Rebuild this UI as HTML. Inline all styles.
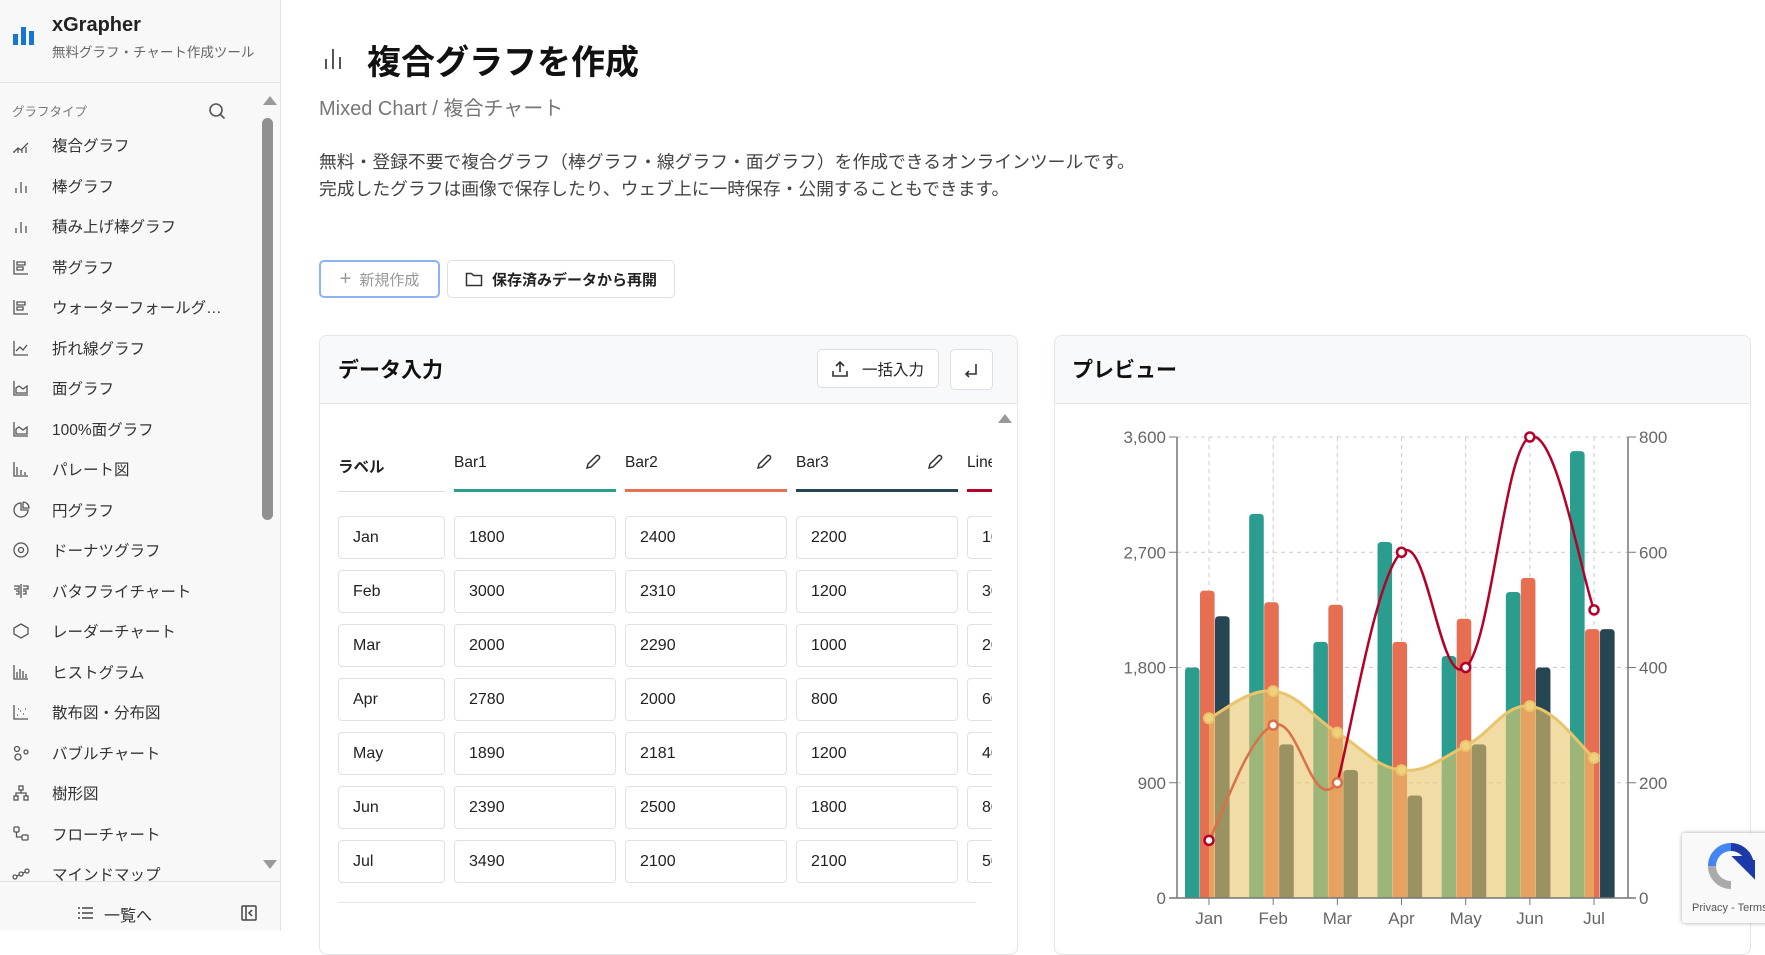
<!DOCTYPE html>
<html><head><meta charset="utf-8"><style>
*{box-sizing:border-box;margin:0;padding:0}
body{width:1765px;height:931px;overflow:hidden;background:#fff;font-family:"Liberation Sans","Noto Sans CJK JP",sans-serif;color:#222;position:relative}
.abs{position:absolute}
#side{left:0;top:0;width:281px;height:931px;background:#f8f8f8;border-right:1px solid #e2e2e2}
.item{position:absolute;left:0;width:260px;height:40px;font-size:15.5px;color:#333;display:flex;align-items:center}
.item svg{position:absolute;left:12px;width:18px;height:18px}
.item span{position:absolute;left:52px;white-space:nowrap}
.card{border:1px solid #e3e5e8;border-radius:8px;background:#fff;overflow:hidden}
.chd{background:#f8f9fa;border-bottom:1px solid #e3e5e8;height:68px;position:relative}
.btn{position:absolute;border:1px solid #dcdfe3;border-radius:5px;background:#fff;display:flex;align-items:center;justify-content:center;font-size:15px;font-weight:bold;color:#222}
.inp{position:absolute;height:43px;border:1px solid #dfe1e5;border-radius:4px;font-size:16px;padding-left:14px;line-height:41px;background:#fff;overflow:hidden;white-space:nowrap}
.th{position:absolute;top:452px;font-size:15.5px;color:#222}
</style></head><body>
<div id="side" class="abs">
  <svg class="abs" style="left:13px;top:25px" width="22" height="20"><rect x="0" y="9" width="5" height="11" fill="#1677d2"/><rect x="8" y="2" width="5" height="18" fill="#1677d2"/><rect x="16" y="6" width="5" height="14" fill="#1677d2"/></svg>
  <div class="abs" style="left:52px;top:14px;font-size:20px;font-weight:bold;color:#222">xGrapher</div>
  <div class="abs" style="left:52px;top:41px;font-size:13.5px;color:#666">無料グラフ・チャート作成ツール</div>
  <div class="abs" style="left:0;top:82px;width:280px;border-top:1px solid #e2e2e2"></div>
  <div class="abs" style="left:12px;top:101px;font-size:12.5px;color:#777">グラフタイプ</div>
  <svg class="abs" style="left:208px;top:102px" width="18" height="18" fill="none" stroke="#555" stroke-width="1.6"><circle cx="8" cy="8" r="6"/><path d="M12.5 12.5l4 4"/></svg>
  <div class="abs" style="left:263px;top:96px;width:0;height:0;border-left:7px solid transparent;border-right:7px solid transparent;border-bottom:9px solid #999"></div>
  <div class="abs" style="left:262px;top:118px;width:11px;height:402px;background:#909090;border-radius:6px"></div>
  <div class="abs" style="left:263px;top:860px;width:0;height:0;border-left:7px solid transparent;border-right:7px solid transparent;border-top:9px solid #999"></div>
  <div class="abs" style="left:0;top:118px;width:260px;height:763px;overflow:hidden" id="list"></div>
  <div class="abs" style="left:0;top:881px;width:280px;height:50px;border-top:1px solid #e2e2e2;background:#f8f8f8">
    <svg class="abs" style="left:77px;top:24px" width="16" height="14" stroke="#444" stroke-width="1.5"><path d="M5 2h11M5 7h11M5 12h11M1 2h2M1 7h2M1 12h2"/></svg>
    <div class="abs" style="left:104px;top:20px;font-size:16px;color:#333">一覧へ</div>
    <svg class="abs" style="left:241px;top:23px" width="16" height="16" fill="none" stroke="#444" stroke-width="1.5"><rect x="1" y="1" width="14" height="14" rx="1"/><path d="M5 1v14M11 5l-3 3 3 3"/></svg>
  </div>
</div>

<svg class="abs" style="left:323px;top:45px" width="22" height="24" stroke="#555" stroke-width="2"><path d="M3 24V14M10 24V4M17 24V12"/></svg>
<div class="abs" style="left:367px;top:35px;font-size:34px;font-weight:bold;color:#111">複合グラフを作成</div>
<div class="abs" style="left:319px;top:92px;font-size:20px;color:#777">Mixed Chart / 複合チャート</div>
<div class="abs" style="left:319px;top:149px;font-size:17.8px;line-height:27px;color:#444;white-space:nowrap">無料・登録不要で複合グラフ（棒グラフ・線グラフ・面グラフ）を作成できるオンラインツールです。<br>完成したグラフは画像で保存したり、ウェブ上に一時保存・公開することもできます。</div>

<div class="btn" style="left:319px;top:260px;width:121px;height:38px;border:2px solid #8fb2f3;color:#999;font-weight:normal"><span style="font-size:20px;margin-right:8px;color:#999">+</span>新規作成</div>
<div class="btn" style="left:447px;top:260px;width:228px;height:38px"><svg width="18" height="16" fill="none" stroke="#333" stroke-width="1.5" style="margin-right:9px"><path d="M1.5 2.5h5l2 2h8v10h-15z"/></svg>保存済みデータから再開</div>

<div class="card abs" style="left:319px;top:335px;width:699px;height:620px">
  <div class="chd"><div class="abs" style="left:18px;top:18px;font-size:21px;font-weight:bold;color:#111">データ入力</div>
    <div class="btn" style="left:497px;top:13px;width:122px;height:39px;font-weight:normal;font-size:15.5px"><svg width="16" height="17" fill="none" stroke="#333" stroke-width="1.6" style="margin-right:14px"><path d="M8 12V2M4 6l4-4 4 4M1 11v5h14v-5"/></svg>一括入力</div>
    <div class="btn" style="left:630px;top:13px;width:43px;height:41px"><svg width="16" height="16" fill="none" stroke="#333" stroke-width="1.6"><path d="M12 2v10H2M5 9l-3 3 3 3"/></svg></div>
  </div>
  <div class="abs" style="left:678px;top:78px;width:0;height:0;border-left:7px solid transparent;border-right:7px solid transparent;border-bottom:9px solid #999"></div>
</div>
<div class="abs" style="left:338px;top:902px;width:638px;border-top:1px solid #e3e5e8"></div>
<div id="tbl"></div>

<div class="card abs" style="left:1054px;top:335px;width:697px;height:620px">
  <div class="chd"><div class="abs" style="left:17px;top:18px;font-size:21px;font-weight:bold;color:#111">プレビュー</div></div>
</div>
<svg id="chart" class="abs" style="left:0;top:0" width="1765" height="931"></svg>

<div class="abs" style="left:1682px;top:833px;width:90px;height:90px;background:#f9f9f9;border-radius:3px;box-shadow:0 0 4px rgba(0,0,0,.35)">
  <svg class="abs" style="left:24px;top:8px" width="50" height="50"><path d="M25 6a19 19 0 0 1 18 13h-8l10 10 0-10" fill="none" stroke="#1c3aa9" stroke-width="8"/><path d="M6 25a19 19 0 0 1 19-19" fill="none" stroke="#4285f4" stroke-width="8"/><path d="M25 44a19 19 0 0 1-19-19" fill="none" stroke="#aaa" stroke-width="8"/></svg>
  <div class="abs" style="left:10px;top:69px;font-size:11px;color:#555;white-space:nowrap">Privacy - Terms</div>
</div>

<script>
var items=["複合グラフ","棒グラフ","積み上げ棒グラフ","帯グラフ","ウォーターフォールグ…","折れ線グラフ","面グラフ","100%面グラフ","パレート図","円グラフ","ドーナツグラフ","バタフライチャート","レーダーチャート","ヒストグラム","散布図・分布図","バブルチャート","樹形図","フローチャート","マインドマップ"];
var icons=['<path d="M2 16l4-4 3 2 7-7M2 17v-2M6 17v-4M10 17v-3M14 17v-6"/>','<path d="M4 16v-5M9 16V5M14 16V9"/>','<path d="M4 16v-5M9 16V5M14 16V9"/>','<path d="M2 2v14h14M5 4h8v3H5zM5 9h6v3H5z"/>','<path d="M2 2v14h14M5 4h8v3H5zM5 9h6v3H5z"/>','<path d="M2 2v14h14M4 12l4-4 3 3 4-5"/>','<path d="M2 2v14h14M4 14V9l3-2 4 3 4-3v7z"/>','<path d="M2 2v14h14M4 14V9l3-2 4 3 4-3v7z"/>','<path d="M2 2v14h14M5 15V7M9 15v-5M13 15v-3"/>','<path d="M9 2a7 7 0 1 0 7 7H9z"/><path d="M11 1v6h6a6 6 0 0 0-6-6"/>','<circle cx="9" cy="9" r="7"/><circle cx="9" cy="9" r="2.5"/>','<path d="M9 2v14M2 4h5v3H2M4 9h3v3H4M11 4h5v3h-5M11 9h3v3h-3"/>','<path d="M9 2l7 4v6l-7 4-7-4V6z"/>','<path d="M2 2v14h14M5 15V9M8 15V6M11 15V8M14 15v-4"/>','<path d="M2 2v14h14M5 12h1M8 8h1M11 11h1M13 6h1M6 6h1"/>','<circle cx="5" cy="5" r="2.5"/><circle cx="6" cy="13" r="3"/><circle cx="14" cy="8" r="2"/>','<rect x="7" y="2" width="4" height="4"/><rect x="2" y="12" width="4" height="4"/><rect x="12" y="12" width="4" height="4"/><path d="M9 6v3M4 12V9h10v3"/>','<rect x="2" y="2" width="5" height="5" rx="1"/><rect x="10" y="10" width="6" height="5" rx="1"/><path d="M4.5 7v5h5.5"/>','<circle cx="9" cy="9" r="2"/><circle cx="3" cy="12" r="2"/><circle cx="15" cy="6" r="2"/><path d="M5 11l2-1M11 8l2-1"/>'];
var h='';items.forEach(function(t,i){var y=27+i*40.5-20;h+='<div class="item" style="top:'+y+'px"><svg viewBox="0 0 18 18" fill="none" stroke="#555" stroke-width="1.3">'+icons[i]+'</svg><span>'+t+'</span></div>'});
document.getElementById('list').innerHTML=h;
var m=["Jan","Feb","Mar","Apr","May","Jun","Jul"],b1=[1800,3000,2000,2780,1890,2390,3490],b2=[2400,2310,2290,2000,2181,2500,2100],b3=[2200,1200,1000,800,1200,1800,2100],ln=["100","300","200","600","400","800","500"];
var t='<div class="th" style="left:338px;font-weight:bold;top:455px">ラベル</div><div class="abs" style="left:338px;top:491px;width:107px;border-top:1px solid #ddd"></div>';
var cols=[["Bar1",454,"#2a9d8f"],["Bar2",625,"#e76f51"],["Bar3",796,"#264653"]];
var pen='<svg width="18" height="18" fill="none" stroke="#333" stroke-width="1.5"><path d="M3 15l1-4 8-8a2 2 0 0 1 3 3l-8 8z"/></svg>';
cols.forEach(function(c){t+='<div class="th" style="left:'+c[1]+'px;top:454px">'+c[0]+'</div><div class="abs" style="left:'+(c[1]+130)+'px;top:453px">'+pen+'</div><div class="abs" style="left:'+c[1]+'px;top:489px;width:162px;height:3px;background:'+c[2]+'"></div>'});
t+='<div class="abs" style="left:967px;top:454px;width:25px;overflow:hidden;font-size:15.5px">Line</div><div class="abs" style="left:967px;top:489px;width:25px;height:3px;background:#b5002a"></div>';
for(var i=0;i<7;i++){var y=516+i*54;t+='<div class="inp" style="left:338px;top:'+y+'px;width:107px">'+m[i]+'</div><div class="inp" style="left:454px;top:'+y+'px;width:162px">'+b1[i]+'</div><div class="inp" style="left:625px;top:'+y+'px;width:162px">'+b2[i]+'</div><div class="inp" style="left:796px;top:'+y+'px;width:162px">'+b3[i]+'</div><div class="inp" style="left:967px;top:'+y+'px;width:25px;border-right:none;border-radius:4px 0 0 4px">'+ln[i]+'</div>'}
document.getElementById('tbl').innerHTML=t;
var y0=898,yt=437,L=1177,R=1628,X=function(i){return 1209+i*64.17},YL=function(v){return y0-v*(y0-yt)/3600},YR=function(v){return y0-v*(y0-yt)/800};
var s='';
[900,1800,2700,3600].forEach(function(v){s+='<line x1="'+L+'" x2="'+R+'" y1="'+YL(v)+'" y2="'+YL(v)+'" stroke="#ccc" stroke-dasharray="4 4"/>'});
for(var i=0;i<7;i++)s+='<line x1="'+X(i)+'" x2="'+X(i)+'" y1="'+yt+'" y2="'+y0+'" stroke="#ccc" stroke-dasharray="4 4"/>';
var bw=14.6;
function bar(x,v,c){var y=YL(v);return '<path d="M'+x+' '+y0+'V'+(y+4)+'q0-4 4-4h'+(bw-8)+'q4 0 4 4V'+y0+'z" fill="'+c+'"/>'}
for(var i=0;i<7;i++){var cx=X(i);s+=bar(cx-24,b1[i],"#2a9d8f")+bar(cx-9,b2[i],"#e76f51")+bar(cx+6,b3[i],"#264653")}
function curve(pts){var d='M'+pts[0][0]+' '+pts[0][1];for(var i=0;i<pts.length-1;i++){var p0=pts[i-1]||pts[i],p1=pts[i],p2=pts[i+1],p3=pts[i+2]||p2,k=0.2;d+='C'+(p1[0]+(p2[0]-p0[0])*k)+' '+(p1[1]+(p2[1]-p0[1])*k)+' '+(p2[0]-(p3[0]-p1[0])*k)+' '+(p2[1]-(p3[1]-p1[1])*k)+' '+p2[0]+' '+p2[1]}return d}
var ya=[312,359,287,222,264,333,243].map(function(v,i){return [X(i),YR(v)]});
var cd=curve(ya);
s+='<path d="'+cd+'L'+X(6)+' '+y0+'L'+X(0)+' '+y0+'z" fill="rgba(233,196,106,0.6)"/>';
s+='<path d="'+cd+'" fill="none" stroke="#e9c46a" stroke-width="3"/>';
ya.forEach(function(p){s+='<circle cx="'+p[0]+'" cy="'+p[1]+'" r="5" fill="#f0d27e" stroke="#e9c46a" stroke-width="2"/>'});
var lp=[100,300,200,600,400,800,500].map(function(v,i){return [X(i),YR(v)]});
s+='<path d="'+curve(lp.slice(0,3).concat([lp[3]])).split('C').slice(0,3).join('C')+'" fill="none" stroke="#d9704a" stroke-width="2.5"/>';
var rp=lp.slice(2);s+='<path d="'+curve(rp)+'" fill="none" stroke="#b5002a" stroke-width="2.5"/>';
lp.forEach(function(p,i){s+='<circle cx="'+p[0]+'" cy="'+p[1]+'" r="4.5" fill="#fff" stroke="'+(i==1||i==2?'#d9704a':'#b5002a')+'" stroke-width="2.5"/>'});
s+='<line x1="'+L+'" x2="'+L+'" y1="'+yt+'" y2="'+y0+'" stroke="#777" stroke-width="1.5"/><line x1="'+R+'" x2="'+R+'" y1="'+yt+'" y2="'+y0+'" stroke="#777" stroke-width="1.5"/><line x1="'+(L-8)+'" x2="'+(R+8)+'" y1="'+y0+'" y2="'+y0+'" stroke="#777" stroke-width="1.5"/>';
[0,900,1800,2700,3600].forEach(function(v){var y=YL(v);s+='<line x1="'+(L-8)+'" x2="'+L+'" y1="'+y+'" y2="'+y+'" stroke="#777"/><text x="'+(L-11)+'" y="'+(y+6)+'" text-anchor="end" font-size="17" fill="#666" font-family="Liberation Sans">'+v.toLocaleString('en-US')+'</text>'});
[0,200,400,600,800].forEach(function(v){var y=YR(v);s+='<line x1="'+R+'" x2="'+(R+8)+'" y1="'+y+'" y2="'+y+'" stroke="#777"/><text x="'+(R+11)+'" y="'+(y+6)+'" font-size="17" fill="#666" font-family="Liberation Sans">'+v+'</text>'});
m.forEach(function(t,i){s+='<line x1="'+X(i)+'" x2="'+X(i)+'" y1="'+y0+'" y2="'+(y0+7)+'" stroke="#777"/><text x="'+X(i)+'" y="924" text-anchor="middle" font-size="17" fill="#666" font-family="Liberation Sans">'+t+'</text>'});
document.getElementById('chart').innerHTML=s;
</script>
</body></html>
